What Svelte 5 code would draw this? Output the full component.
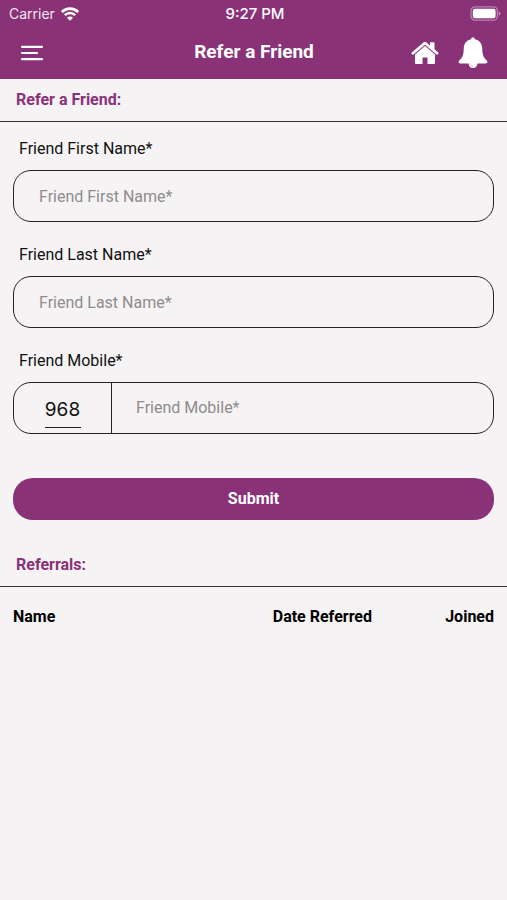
<script>
  let firstName = $state('');
  let lastName = $state('');
  let countryCode = $state('968');
  let mobile = $state('');
  let referrals = $state([]);

  function submit(e) {
    e.preventDefault();
    if (!firstName.trim() || !lastName.trim() || !mobile.trim()) return;

    referrals.push({
      name: `${firstName} ${lastName}`,
      date: new Date().toLocaleDateString(),
      joined: 'No'
    });
    firstName = '';
    lastName = '';
    mobile = '';
  }
</script>

<div class="screen">
  <header class="header">
    <div class="status-bar">
      <div class="status-carrier">
        <span>Carrier</span>
        <svg width="18" height="14" viewBox="0 0 18 14" aria-hidden="true">
          <g fill="none" stroke="#fff" stroke-width="2.6">
            <path d="M0.8 5a11.6 11.6 0 0 1 16.4 0" />
            <path d="M3.8 8.2a7.4 7.4 0 0 1 10.4 0" />
          </g>
          <path d="M9 13.8 6 10.8a4.2 4.2 0 0 1 6 0z" fill="#fff" />
        </svg>
      </div>
      <span class="status-time">9:27 PM</span>
      <svg class="battery" width="31" height="15" viewBox="0 0 31 15" aria-hidden="true">
        <rect x="1" y="0.8" width="26.4" height="13.4" rx="4" fill="none" stroke="#fff" stroke-opacity="0.4" stroke-width="1.3" />
        <rect x="2.8" y="2.7" width="22.8" height="9.6" rx="2.2" fill="#fff" />
        <path d="M28.8 5.400c2 .7 2 3.500 0 4.200z" fill="#fff" fill-opacity="0.5" />
      </svg>
    </div>

    <div class="toolbar">
      <button class="icon-btn" aria-label="Menu">
        <svg width="24" height="16" viewBox="0 0 24 16">
          <path d="M2 1.800h20M2 8h15M2 14.200h20" stroke="#fff" stroke-width="2.200" stroke-linecap="round" />
        </svg>
      </button>
      <h1 class="title">Refer a Friend</h1>
      <div class="actions">
        <button class="icon-btn" aria-label="Home">
          <svg width="28" height="24" viewBox="0 0 28 24" fill="#fff">
            <path d="M14 .7c.5 0 .9.2 1.3.5l3.7 3.2V2c0-.5.3-.8.8-.8h2.9c.5 0 .8.3.8.8v6.2l3.8 3.3c.4.3.4.8.1 1.2l-.7.8c-.3.4-.8.4-1.2.1L14 3.8 2.5 13.6c-.4.3-.9.3-1.200-.1l-.7-.8c-.3-.4-.3-.9.1-1.200l12-10.300c.4-.3.8-.5 1.300-.5z" />
            <path d="M14 5l10 8.500v8.300c0 .8-.5 1.300-1.300 1.300h-6.200v-6.600h-5v6.600H5.300c-.8 0-1.300-.5-1.300-1.300v-8.300z" />
          </svg>
        </button>
        <button class="icon-btn" aria-label="Notifications">
          <svg width="30" height="32" viewBox="0 0 30 32" fill="#fff">
            <path d="M15 .3c1.100 0 1.800.8 1.800 1.900 4.600.9 7.200 4.300 7.400 8.800.2 5.300.5 9.200 4.600 12.400.6.600.7 1.300.6 1.900-.2.700-.8 1.100-1.600 1.100H2.200c-.8 0-1.400-.4-1.600-1.100-.1-.6 0-1.300.6-1.900 4.100-3.200 4.400-7.100 4.600-12.400.2-4.500 2.800-7.900 7.400-8.800 0-1.100.7-1.900 1.800-1.900z" />
            <path d="M10.600 26h8.800c0 3-1.800 5-4.400 5s-4.400-2-4.400-5z" />
            <path d="M12.200 27c.2 1.500 1.100 2.400 2.600 2.500" fill="none" stroke="#8a3278" stroke-opacity=".5" stroke-width=".6" stroke-linecap="round" />
          </svg>
        </button>
      </div>
    </div>
  </header>

  <main>
    <h2 class="section-title">Refer a Friend:</h2>

    <form class="form" onsubmit={submit}>
      <div class="field">
        <label for="first-name">Friend First Name*</label>
        <input id="first-name" class="box" type="text" placeholder="Friend First Name*" bind:value={firstName} />
      </div>

      <div class="field">
        <label for="last-name">Friend Last Name*</label>
        <input id="last-name" class="box" type="text" placeholder="Friend Last Name*" bind:value={lastName} />
      </div>

      <div class="field">
        <label for="mobile">Friend Mobile*</label>
        <div class="box phone">
          <div class="phone-code">
            <input type="text" inputmode="numeric" aria-label="Country code" bind:value={countryCode} />
          </div>
          <input id="mobile" class="phone-number" type="tel" placeholder="Friend Mobile*" bind:value={mobile} />
        </div>
      </div>

      <button class="submit" type="submit">Submit</button>
    </form>

    <h2 class="section-title">Referrals:</h2>

    <div class="referrals">
      <table>
        <thead>
          <tr>
            <th class="col-name">Name</th>
            <th>Date Referred</th>
            <th class="col-joined">Joined</th>
          </tr>
        </thead>
        <tbody>
          {#each referrals as referral}
            <tr>
              <td>{referral.name}</td>
              <td>{referral.date}</td>
              <td class="col-joined">{referral.joined}</td>
            </tr>
          {/each}
        </tbody>
      </table>
    </div>
  </main>
</div>

<style>
  :global(body) {
    background: #f6f3f4;
  }

  .screen {
    min-height: 100vh;
    background: #f6f3f4;
    color: #111;
    font-family: Roboto, "Liberation Sans", sans-serif;
    font-size: 16px;
    line-height: 20px;
  }

  h1,
  h2 {
    margin: 0;
  }

  button,
  input {
    box-sizing: border-box;
    margin: 0;
    padding: 0;
    border: none;
    background: transparent;
    color: inherit;
    font: inherit;
    outline: none;
  }

  button {
    cursor: pointer;
  }

  /* header */
  .header {
    background: #8a3278;
    color: #fff;
  }

  .status-bar {
    display: grid;
    grid-template-columns: 1fr auto 1fr;
    align-items: center;
    height: 27px;
    padding: 0 6px 0 9px;
    font-family: Inter, "Liberation Sans", sans-serif;
    font-size: 14px;
  }

  .status-carrier {
    display: flex;
    align-items: center;
    gap: 6px;
    color: #f1e4ee;
  }

  .status-time {
    font-size: 15px;
    font-weight: 500;
  }

  .battery {
    justify-self: end;
  }

  .toolbar {
    display: grid;
    grid-template-columns: 1fr auto 1fr;
    align-items: center;
    height: 52px;
    padding: 0 19px 0 20px;
  }

  .icon-btn {
    display: flex;
    justify-self: start;
  }

  .title {
    padding-bottom: 2px;
    font-size: 19px;
    font-weight: 700;
    line-height: 24px;
  }

  .actions {
    display: flex;
    align-items: center;
    justify-content: flex-end;
    gap: 19px;
  }

  /* sections */
  .section-title {
    padding: 11px 16px;
    border-bottom: 1px solid #333;
    color: #8a3278;
    font-size: 16px;
    font-weight: 700;
  }

  .form {
    display: flex;
    flex-direction: column;
    gap: 23px;
    padding: 17px 13px 24px;
  }

  .field {
    display: flex;
    flex-direction: column;
    gap: 11px;
  }

  .field label {
    padding-left: 6px;
  }

  .box {
    box-sizing: border-box;
    width: 100%;
    height: 52px;
    border: 1px solid #222;
    border-radius: 18px;
  }

  input.box {
    padding: 0 25px;
  }

  input::placeholder {
    color: #8e8c8d;
    opacity: 1;
  }

  .phone {
    display: flex;
    overflow: hidden;
  }

  .phone-code {
    display: flex;
    align-items: center;
    justify-content: center;
    width: 97px;
    border-right: 1px solid #222;
  }

  .phone-code input {
    width: 36px;
    height: 36px;
    margin-top: 4px;
    border-bottom: 1px solid #222;
    font-family: Inter, "Liberation Sans", sans-serif;
    font-size: 19px;
    text-align: center;
  }

  .phone-number {
    flex: 1;
    min-width: 0;
    padding: 0 24px;
  }

  .submit {
    height: 42px;
    margin-top: 21px;
    border-radius: 20px;
    background: #8a3278;
    color: #fff;
    font-weight: 700;
  }

  /* referrals */
  .referrals {
    padding: 20px 13px;
  }

  table {
    width: 100%;
    border-collapse: collapse;
  }

  th,
  td {
    padding: 0 0 12px;
    text-align: left;
  }

  th {
    color: #000;
    font-weight: 700;
  }

  .col-name {
    width: 54%;
  }

  .col-joined {
    text-align: right;
  }
</style>
